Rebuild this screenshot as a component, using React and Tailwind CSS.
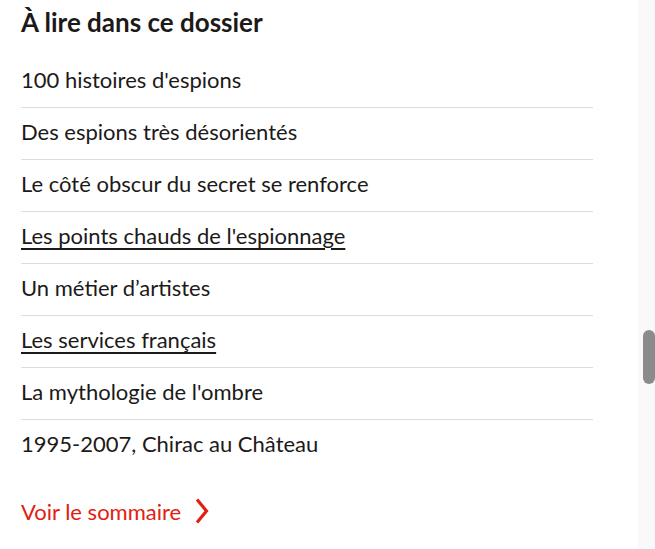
import React from "react";

const items = [
  { t: "100 histoires d'espions" },
  { t: "Des espions très désorientés" },
  { t: "Le côté obscur du secret se renforce" },
  { t: "Les points chauds de l'espionnage", u: true },
  { t: "Un métier d’artistes" },
  { t: "Les services français", u: true },
  { t: "La mythologie de l'ombre" },
  { t: "1995-2007, Chirac au Château" },
];

export default function App() {
  return (
    <div
      className="flex w-[655px] h-[549px] bg-white overflow-hidden text-[#1c1a19]"
      style={{ fontFamily: "Lato, 'Open Sans', sans-serif" }}
    >
      <div className="flex-1 pl-[21px]">
        <h2 className="mt-[6px] h-[32px] text-[26px] leading-[32px] font-bold">
          À lire dans ce dossier
        </h2>
        <ul className="mt-[18px] w-[572px]">
          {items.map((it, i) => (
            <li
              key={i}
              className={
                "h-[52px] pb-[5px] flex items-center text-[22px] " +
                (i < items.length - 1 ? "border-b border-[#dcdcdc]" : "")
              }
            >
              <span
                className={
                  it.u
                    ? "underline decoration-2 underline-offset-[4px] decoration-[#1c1a19]"
                    : ""
                }
              >
                {it.t}
              </span>
            </li>
          ))}
        </ul>
        <a className="mt-[23px] flex items-center gap-[14px] text-[22px] text-[#e2200f] h-[32px]">
          <span>Voir le sommaire</span>
          <svg width="14" height="26" viewBox="0 0 14 26" fill="none">
            <path d="M2 1.5 L11.5 13 L2 24.5" stroke="#e2200f" strokeWidth="3.2" />
          </svg>
        </a>
      </div>
      <div className="w-[17px] bg-[#f9f9f9] relative">
        <div className="absolute left-[5px] top-[330px] w-[12px] h-[54px] rounded-[6px] bg-[#8b8b8b]" />
      </div>
    </div>
  );
}
